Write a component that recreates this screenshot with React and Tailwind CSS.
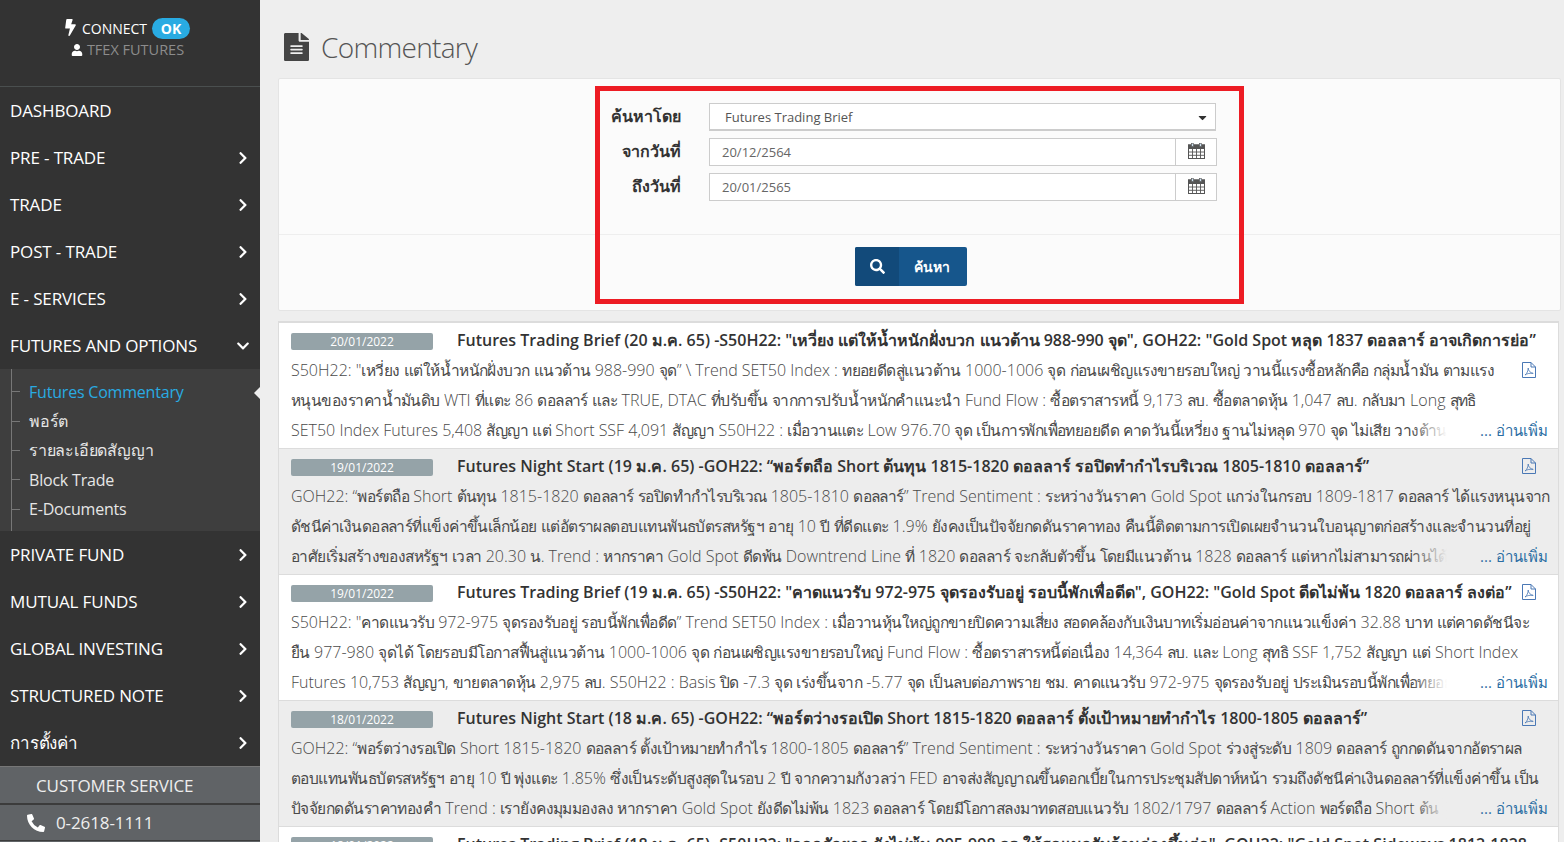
import {
  FaBolt,
  FaCaretDown,
  FaChevronDown,
  FaChevronRight,
  FaFileAlt,
  FaPhoneAlt,
  FaSearch,
  FaUser,
} from "react-icons/fa";

const fontStack = "font-['Open_Sans','Noto_Sans','DejaVu_Sans',sans-serif]";

const menuTop = [
  { label: "DASHBOARD" },
  { label: "PRE - TRADE", arrow: true },
  { label: "TRADE", arrow: true },
  { label: "POST - TRADE", arrow: true },
  { label: "E - SERVICES", arrow: true },
];

const menuBottom = ["PRIVATE FUND", "MUTUAL FUNDS", "GLOBAL INVESTING", "STRUCTURED NOTE", "การตั้งค่า"];

const subMenu = ["Futures Commentary", "พอร์ต", "รายละเอียดสัญญา", "Block Trade", "E-Documents"];

const rows = [
  {
    date: "20/01/2022",
    title:
      'Futures Trading Brief (20 ม.ค. 65) -S50H22: "เหวี่ยง แต่ให้น้ำหนักฝั่งบวก แนวต้าน 988-990 จุด", GOH22: "Gold Spot หลุด 1837 ดอลลาร์ อาจเกิดการย่อ”',
    pdfOnBody: true,
    lines: [
      'S50H22: "เหวี่ยง แต่ให้น้ำหนักฝั่งบวก แนวต้าน 988-990 จุด” \\ Trend SET50 Index : ทยอยดีดสู่แนวต้าน 1000-1006 จุด ก่อนเผชิญแรงขายรอบใหญ่ วานนี้แรงซื้อหลักคือ กลุ่มน้ำมัน ตามแรง',
      "หนุนของราคาน้ำมันดิบ WTI ที่แตะ 86 ดอลลาร์ และ TRUE, DTAC ที่ปรับขึ้น จากการปรับน้ำหนักคำแนะนำ Fund Flow : ซื้อตราสารหนี้ 9,173 ลบ. ซื้อตลาดหุ้น 1,047 ลบ. กลับมา Long สุทธิ",
      "SET50 Index Futures 5,408 สัญญา แต่ Short SSF 4,091 สัญญา S50H22 : เมื่อวานแตะ Low 976.70 จุด เป็นการพักเพื่อทยอยดีด คาดวันนี้เหวี่ยง ฐานไม่หลุด 970 จุด ไม่เสีย วางต้าน",
    ],
  },
  {
    date: "19/01/2022",
    title: "Futures Night Start (19 ม.ค. 65) -GOH22: “พอร์ตถือ Short ต้นทุน 1815-1820 ดอลลาร์ รอปิดทำกำไรบริเวณ 1805-1810 ดอลลาร์”",
    lines: [
      "GOH22: “พอร์ตถือ Short ต้นทุน 1815-1820 ดอลลาร์ รอปิดทำกำไรบริเวณ 1805-1810 ดอลลาร์” Trend Sentiment : ระหว่างวันราคา Gold Spot แกว่งในกรอบ 1809-1817 ดอลลาร์ ได้แรงหนุนจาก",
      "ดัชนีค่าเงินดอลลาร์ที่แข็งค่าขึ้นเล็กน้อย แต่อัตราผลตอบแทนพันธบัตรสหรัฐฯ อายุ 10 ปี ที่ดีดแตะ 1.9% ยังคงเป็นปัจจัยกดดันราคาทอง คืนนี้ติดตามการเปิดเผยจำนวนใบอนุญาตก่อสร้างและจำนวนที่อยู่",
      "อาศัยเริ่มสร้างของสหรัฐฯ เวลา 20.30 น. Trend : หากราคา Gold Spot ดีดพ้น Downtrend Line ที่ 1820 ดอลลาร์ จะกลับตัวขึ้น โดยมีแนวต้าน 1828 ดอลลาร์ แต่หากไม่สามารถผ่านได้",
    ],
  },
  {
    date: "19/01/2022",
    title:
      'Futures Trading Brief (19 ม.ค. 65) -S50H22: "คาดแนวรับ 972-975 จุดรองรับอยู่ รอบนี้พักเพื่อดีด", GOH22: "Gold Spot ดีดไม่พ้น 1820 ดอลลาร์ ลงต่อ”',
    lines: [
      'S50H22: "คาดแนวรับ 972-975 จุดรองรับอยู่ รอบนี้พักเพื่อดีด” Trend SET50 Index : เมื่อวานหุ้นใหญ่ถูกขายปิดความเสี่ยง สอดคล้องกับเงินบาทเริ่มอ่อนค่าจากแนวแข็งค่า 32.88 บาท แต่คาดดัชนีจะ',
      "ยืน 977-980 จุดได้ โดยรอบมีโอกาสฟื้นสู่แนวต้าน 1000-1006 จุด ก่อนเผชิญแรงขายรอบใหญ่ Fund Flow : ซื้อตราสารหนี้ต่อเนื่อง 14,364 ลบ. และ Long สุทธิ SSF 1,752 สัญญา แต่ Short Index",
      "Futures 10,753 สัญญา, ขายตลาดหุ้น 2,975 ลบ. S50H22 : Basis ปิด -7.3 จุด เร่งขึ้นจาก -5.77 จุด เป็นลบต่อภาพราย ชม. คาดแนวรับ 972-975 จุดรองรับอยู่ ประเมินรอบนี้พักเพื่อทยอย",
    ],
  },
  {
    date: "18/01/2022",
    title: "Futures Night Start (18 ม.ค. 65) -GOH22: “พอร์ตว่างรอเปิด Short 1815-1820 ดอลลาร์ ตั้งเป้าหมายทำกำไร 1800-1805 ดอลลาร์”",
    lines: [
      "GOH22: “พอร์ตว่างรอเปิด Short 1815-1820 ดอลลาร์ ตั้งเป้าหมายทำกำไร 1800-1805 ดอลลาร์” Trend Sentiment : ระหว่างวันราคา Gold Spot ร่วงสู่ระดับ 1809 ดอลลาร์ ถูกกดดันจากอัตราผล",
      "ตอบแทนพันธบัตรสหรัฐฯ อายุ 10 ปี พุ่งแตะ 1.85% ซึ่งเป็นระดับสูงสุดในรอบ 2 ปี จากความกังวลว่า FED อาจส่งสัญญาณขึ้นดอกเบี้ยในการประชุมสัปดาห์หน้า รวมถึงดัชนีค่าเงินดอลลาร์ที่แข็งค่าขึ้น เป็น",
      "ปัจจัยกดดันราคาทองคำ Trend : เรายังคงมุมมองลง หากราคา Gold Spot ยังดีดไม่พ้น 1823 ดอลลาร์ โดยมีโอกาสลงมาทดสอบแนวรับ 1802/1797 ดอลลาร์ Action พอร์ตถือ Short ต้น",
    ],
  },
  {
    date: "18/01/2022",
    title:
      'Futures Trading Brief (18 ม.ค. 65) -S50H22: "ออกตัวยาก ยังไม่พ้น 995-998 จุด ให้รอแนวรับด้านล่างขึ้นต่อ", GOH22: "Gold Spot Sideways 1812-1828',
    pdfOnBody: true,
    lines: [],
  },
];

// The Thai fallback font runs wider than the original one, so Thai runs get tightened on their own
function BodyLine({ text }) {
  return text.split(/([\u0E00-\u0E7F]+)/).map((part, i) =>
    i % 2 === 1 ? (
      <span key={i} className="text-[15.5px] tracking-[-0.55px]">
        {part}
      </span>
    ) : (
      part
    )
  );
}

function CalendarIcon() {
  return (
    <svg width="17" height="16" viewBox="0 0 17 16" fill="none">
      <rect x="0.5" y="2" width="16" height="13.5" fill="#fff" stroke="#555" />
      <rect x="0.5" y="2" width="16" height="3.5" fill="#555" stroke="#555" />
      <rect x="3.5" y="0.5" width="2" height="3" fill="#cfe3f2" stroke="#555" strokeWidth="0.6" />
      <rect x="11.5" y="0.5" width="2" height="3" fill="#cfe3f2" stroke="#555" strokeWidth="0.6" />
      <path d="M4.5 5.5v10M8.5 5.5v10M12.5 5.5v10M0.5 9h16M0.5 12.3h16" stroke="#555" strokeWidth="0.9" />
    </svg>
  );
}

function PdfIcon() {
  return (
    <svg width="14" height="16" viewBox="0 0 14 16" fill="none" stroke="#4a78b5" strokeWidth="1" className="shrink-0">
      <path d="M0.5 0.5h8.5l4.5 4.5v10.5h-13z" />
      <path d="M9 0.5v4.5h4.5" />
      <path d="M3 13c2-1.5 3.2-4.2 3.2-7 0 2.6 2.2 5 5 5.4-3-.4-6.1 0-8.200 1.600z" strokeWidth="0.8" />
    </svg>
  );
}

function NavItem({ label, icon }) {
  return (
    <div className="h-[47px] flex items-center justify-between pl-[10px] pr-[10px] text-[17px] text-white tracking-[-0.14px]">
      <span>{label}</span>
      {icon}
    </div>
  );
}

function NewsRow({ row, shaded }) {
  return (
    <div className={`h-[126px] border-b border-[#dcdcdc] pl-[12px] pt-[6px] ${shaded ? "bg-[#ededed]" : "bg-white"}`}>
      <div className="h-[22px] mb-[4px] flex items-center">
        <span className="w-[142px] h-[17px] mt-[2px] shrink-0 rounded-[2px] bg-[#95a3a8] text-white text-[12px] leading-[17px] text-center">
          {row.date}
        </span>
        <span className={`ml-[24px] shrink-0 text-[16px] font-semibold text-[#333] whitespace-nowrap overflow-hidden ${row.pdfOnBody ? "w-[1095px]" : "w-[1058px]"}`}>
          {row.title}
        </span>
        {!row.pdfOnBody && (
          <span className="ml-[7px]">
            <PdfIcon />
          </span>
        )}
      </div>
      {row.lines.map((line, i) => (
        <div key={i} className="h-[30px] flex items-center text-[16px] font-light text-[#4a4a4a] whitespace-nowrap">
          <span className={`relative overflow-hidden ${i === 2 ? "w-[1156px]" : row.pdfOnBody ? "w-[1231px]" : "w-[1264px]"}`}>
            <BodyLine text={line} />
            {i === 2 && (
              <span className={`absolute right-0 top-0 bottom-0 w-[36px] bg-gradient-to-r from-transparent ${shaded ? "to-[#ededed]" : "to-white"}`} />
            )}
          </span>
          {i === 0 && row.pdfOnBody && <PdfIcon />}
          {i === 2 && <span className="ml-[33px] text-[#2b6da3] text-[15px] font-normal">... อ่านเพิ่ม</span>}
        </div>
      ))}
    </div>
  );
}

export default function App() {
  return (
    <div className={`flex h-screen overflow-hidden bg-[#eeeeee] ${fontStack}`}>
      {/* Side Menu */}
      <nav className="w-[260px] shrink-0 flex flex-col bg-[#333333]">
        <div className="h-[87px] shrink-0 border-b border-[#4a4f4f] pt-[18px] flex flex-col items-center">
          <div className="flex items-center h-[21px] pr-[8px] text-[14px] text-white">
            <FaBolt className="text-[17px] mr-[3px] -mt-[3px]" />
            <span>CONNECT</span>
            <span className="ml-[5px] w-[38px] h-[21px] rounded-full bg-[#29abe2] text-center text-[14px] leading-[21px] font-bold">OK</span>
          </div>
          <div className="flex items-center h-[20px] mt-[1px] pr-[5px] text-[14.5px] text-[#8c8c8c]">
            <FaUser className="text-[12px] text-white mr-[4px]" />
            <span>TFEX FUTURES</span>
          </div>
        </div>

        {menuTop.map((item) => (
          <NavItem key={item.label} label={item.label} icon={item.arrow && <FaChevronRight className="text-[14px]" />} />
        ))}
        <NavItem label="FUTURES AND OPTIONS" icon={<FaChevronDown className="text-[14px]" />} />

        {/* Sub menu */}
        <div className="relative h-[162px] shrink-0 bg-[#3e3e3e] pt-[8px]">
          <div className="absolute left-[11px] top-0 bottom-0 w-px bg-[#777]" />
          {subMenu.map((label, i) => (
            <div
              key={label}
              className={`h-[29.4px] flex items-center pl-[11px] text-[16px] tracking-[-0.2px] ${i === 0 ? "text-[#29abe2]" : "text-[#e6e6e6]"}`}
            >
              <span className="w-[9px] h-px bg-[#777] mr-[9px]" />
              {label}
            </div>
          ))}
          <div className="absolute right-0 top-[18px] w-0 h-0 border-y-[6px] border-y-transparent border-r-[6px] border-r-[#eeeeee]" />
        </div>

        {menuBottom.map((label) => (
          <NavItem key={label} label={label} icon={<FaChevronRight className="text-[14px]" />} />
        ))}

        {/* Customer service */}
        <div className="flex-1 bg-[#606366] border-t border-[#777] text-[#eee] text-[17px] tracking-[-0.1px]">
          <div className="h-[38px] pt-[2px] flex items-center pl-[36px] border-b-2 border-[#3c3c3c]">CUSTOMER SERVICE</div>
          <div className="h-[36px] flex items-center pl-[27px] border-b border-[#3c3c3c]">
            <FaPhoneAlt className="text-[18px] text-white mr-[11px]" />
            0-2618-1111
          </div>
        </div>
      </nav>

      {/* Main Content */}
      <main className="flex-1 min-w-0 pl-[18px] pr-[3px]">
        <div className="h-[78px] pt-[16px] pl-[6px] flex items-center text-[#555]">
          <FaFileAlt className="h-[28px] w-[25px] text-[#444]" preserveAspectRatio="none" />
          <h1 className="ml-[12px] text-[28px] font-light tracking-[-0.7px]">Commentary</h1>
        </div>

        {/* Search card */}
        <div className="relative h-[233px] border border-[#e4e4e4] rounded-[2px] bg-[#fbfbfb]">
          <div className="h-[156px] border-b border-[#eeeeee] pt-[24px] flex flex-col gap-[7px] text-[14px]">
            <div className="flex items-center h-[28px]">
              <label className="w-[402px] -mt-[2px] text-right text-[16px] font-bold text-[#333]">ค้นหาโดย</label>
              <div className="ml-[28px] w-[507px] h-[28px] pt-[2px] border border-[#ccc] border-b-2 bg-white flex items-center justify-between pl-[15px] pr-[6px] text-[13px] text-[#555]">
                Futures Trading Brief
                <FaCaretDown className="text-[13px] text-[#333]" />
              </div>
            </div>
            {[
              ["จากวันที่", "20/12/2564"],
              ["ถึงวันที่", "20/01/2565"],
            ].map(([label, value]) => (
              <div key={label} className="flex items-center h-[28px]">
                <label className="w-[402px] -mt-[2px] text-right text-[16px] font-bold text-[#333]">{label}</label>
                <div className="ml-[28px] w-[508px] h-[28px] border border-[#ccc] bg-white flex items-center text-[13px] text-[#666]">
                  <span className="flex-1 pl-[12px] pt-[2px]">{value}</span>
                  <span className="w-[41px] h-full pb-[2px] border-l border-[#ccc] flex items-center justify-center">
                    <CalendarIcon />
                  </span>
                </div>
              </div>
            ))}
          </div>
          <div className="pt-[12px] pl-[576px]">
            <button className="w-[112px] h-[39px] flex rounded-[2px] overflow-hidden bg-[#16568c] text-white text-[14px] font-bold">
              <span className="w-[44px] h-full bg-[#124a7a] flex items-center justify-center">
                <FaSearch className="text-[15px]" />
              </span>
              <span className="flex-1 h-full flex items-center justify-center pr-[2px]">ค้นหา</span>
            </button>
          </div>

          {/* Red highlight */}
          <div className="absolute left-[316px] top-[7px] w-[649px] h-[218px] border-[5px] border-[#ed1c24] pointer-events-none" />
        </div>

        {/* News list */}
        <div className="mt-[10px] mr-[2px] border-t-2 border-x border-[#dcdcdc]">
          {rows.map((row, i) => (
            <NewsRow key={i} row={row} shaded={i % 2 === 1} />
          ))}
        </div>
      </main>
    </div>
  );
}
